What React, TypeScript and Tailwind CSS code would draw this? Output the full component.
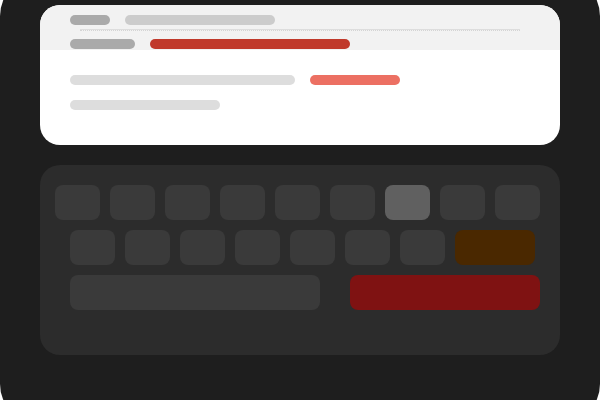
const ROW_ONE = [false, false, false, false, false, false, true, false, false];
const ROW_TWO = 7;

function Pill({ className }: { className: string }) {
  return <div className={`h-[10px] rounded-full ${className}`} />;
}

function Key({ active = false }: { active?: boolean }) {
  return (
    <div
      className={`h-[35px] w-[45px] rounded-[8px] ${active ? 'bg-[#606060]' : 'bg-[#3a3a3a]'}`}
    />
  );
}

export default function App() {
  return (
    <div className="h-[400px] w-[600px] overflow-hidden bg-white">
      <div className="-mt-[24px] h-[448px] rounded-[40px] bg-[#1e1e1e] px-[40px] pt-[29px]">
        {/* Message card */}
        <div className="h-[140px] overflow-hidden rounded-[20px] bg-white">
          <div className="h-[45px] bg-[#f2f2f2] px-[30px] pt-[10px]">
            <div className="flex gap-[15px]">
              <Pill className="w-[40px] bg-[#aaaaaa]" />
              <Pill className="w-[150px] bg-[#cccccc]" />
            </div>
            <div className="mx-[10px] mt-[4px] h-px bg-[#dddddd]" />
            <div className="mx-[10px] border-b border-dotted border-[#d4d4d4]" />
            <div className="mt-[8px] flex gap-[15px]">
              <Pill className="w-[65px] bg-[#aaaaaa]" />
              <Pill className="w-[200px] bg-[#c0392b]" />
            </div>
          </div>
          <div className="px-[30px] pt-[25px]">
            <div className="flex gap-[15px]">
              <Pill className="w-[225px] bg-[#dddddd]" />
              <Pill className="w-[90px] bg-[#ec7063]" />
            </div>
            <Pill className="mt-[15px] w-[150px] bg-[#dddddd]" />
          </div>
        </div>

        {/* Keyboard */}
        <div className="mt-[20px] h-[190px] rounded-[20px] bg-[#2c2c2c] px-[15px] pt-[20px]">
          <div className="flex gap-[10px]">
            {ROW_ONE.map((active, i) => (
              <Key key={i} active={active} />
            ))}
          </div>
          <div className="mt-[10px] flex gap-[10px] pl-[15px]">
            {Array.from({ length: ROW_TWO }).map((_, i) => (
              <Key key={i} />
            ))}
            <div className="h-[35px] w-[80px] rounded-[8px] bg-[#4a2800]" />
          </div>
          <div className="mt-[10px] flex gap-[30px] pl-[15px]">
            <div className="h-[35px] w-[250px] rounded-[8px] bg-[#3a3a3a]" />
            <div className="h-[35px] w-[190px] rounded-[8px] bg-[#7f1212]" />
          </div>
        </div>
      </div>
    </div>
  );
}
